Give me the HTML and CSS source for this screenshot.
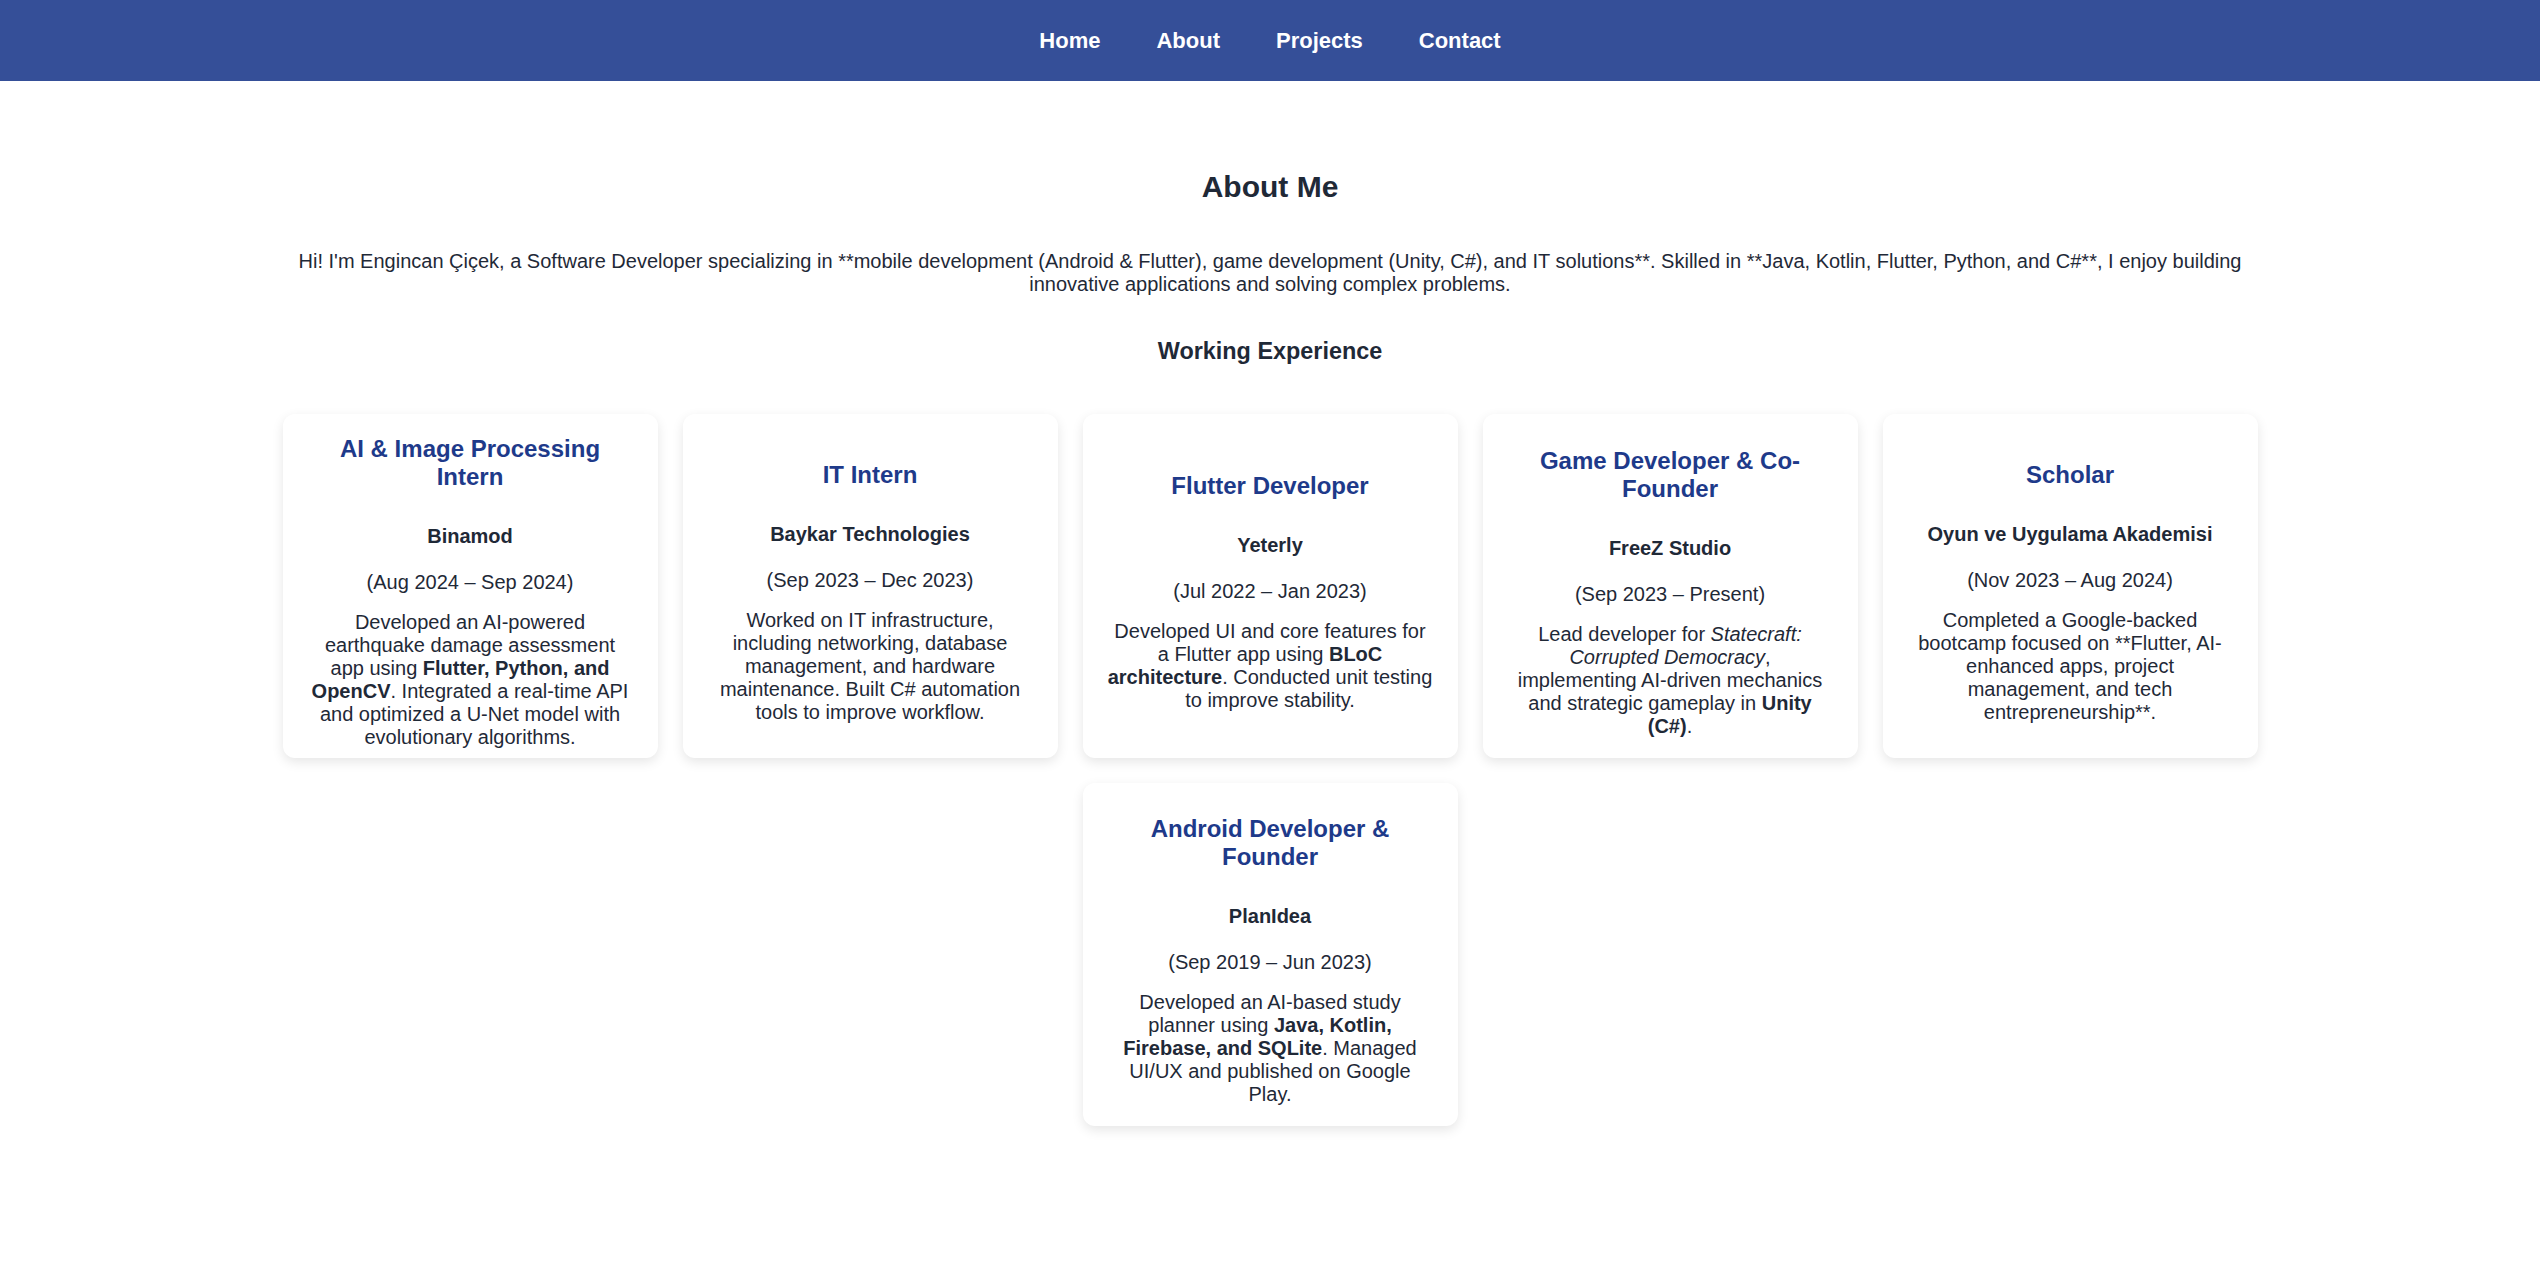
FILE: index.html
```html
<!DOCTYPE html>
<html lang="en">
<head>
<meta charset="UTF-8">
<title>About Me</title>
<link rel="stylesheet" href="styles.css">
</head>
<body>
<header class="navbar">
  <nav class="nav-links">
    <a href="#" class="nav-link">Home</a>
    <a href="#" class="nav-link">About</a>
    <a href="#" class="nav-link">Projects</a>
    <a href="#" class="nav-link">Contact</a>
  </nav>
</header>
<main class="about">
  <h2 class="about-title">About Me</h2>
  <p class="intro">Hi! I'm Engincan Çiçek, a Software Developer specializing in **mobile development (Android &amp; Flutter), game development (Unity, C#), and IT solutions**. Skilled in **Java, Kotlin, Flutter, Python, and C#**, I enjoy building innovative applications and solving complex problems.</p>
  <h3 class="section-title">Working Experience</h3>
  <div class="cards">
    <div class="card">
      <h3 class="card-title">AI &amp; Image Processing Intern</h3>
      <h4 class="company">Binamod</h4>
      <p class="date">(Aug 2024 – Sep 2024)</p>
      <p class="desc">Developed an AI-powered earthquake damage assessment app using <strong>Flutter, Python, and OpenCV</strong>. Integrated a real-time API and optimized a U-Net model with evolutionary algorithms.</p>
    </div>
    <div class="card">
      <h3 class="card-title">IT Intern</h3>
      <h4 class="company">Baykar Technologies</h4>
      <p class="date">(Sep 2023 – Dec 2023)</p>
      <p class="desc">Worked on IT infrastructure, including networking, database management, and hardware maintenance. Built C# automation tools to improve workflow.</p>
    </div>
    <div class="card">
      <h3 class="card-title">Flutter Developer</h3>
      <h4 class="company">Yeterly</h4>
      <p class="date">(Jul 2022 – Jan 2023)</p>
      <p class="desc">Developed UI and core features for a Flutter app using <strong>BLoC architecture</strong>. Conducted unit testing to improve stability.</p>
    </div>
    <div class="card">
      <h3 class="card-title">Game Developer &amp; Co-Founder</h3>
      <h4 class="company">FreeZ Studio</h4>
      <p class="date">(Sep 2023 – Present)</p>
      <p class="desc">Lead developer for <em>Statecraft: Corrupted Democracy</em>, implementing AI-driven mechanics and strategic gameplay in <strong>Unity (C#)</strong>.</p>
    </div>
    <div class="card">
      <h3 class="card-title">Scholar</h3>
      <h4 class="company">Oyun ve Uygulama Akademisi</h4>
      <p class="date">(Nov 2023 – Aug 2024)</p>
      <p class="desc">Completed a Google-backed bootcamp focused on **Flutter, AI-enhanced apps, project management, and tech entrepreneurship**.</p>
    </div>
    <div class="card">
      <h3 class="card-title">Android Developer &amp; Founder</h3>
      <h4 class="company">PlanIdea</h4>
      <p class="date">(Sep 2019 – Jun 2023)</p>
      <p class="desc">Developed an AI-based study planner using <strong>Java, Kotlin, Firebase, and SQLite</strong>. Managed UI/UX and published on Google Play.</p>
    </div>
  </div>
</main>
</body>
</html>
```
FILE: styles.css
```css
html, body {
  margin: 0;
  padding: 0;
  background: #ffffff;
}

body {
  font-family: "Liberation Sans", Arial, Helvetica, sans-serif;
  font-size: 20px;
  color: #1f2937;
}

.navbar {
  height: 81px;
  background: #354f98;
  display: flex;
  align-items: center;
  justify-content: center;
}

.nav-links {
  display: flex;
  gap: 56px;
  padding-top: 1px;
}

.nav-link {
  color: #ffffff;
  text-decoration: none;
  font-weight: bold;
  font-size: 22px;
}

.about {
  max-width: 2000px;
  margin: 0 auto;
  padding: 89px 0 60px;
  text-align: center;
}

.about-title {
  font-size: 30px;
  font-weight: bold;
  margin: 0 0 46px;
  color: #1f2937;
}

.intro {
  margin: 0 0 42px;
}

.section-title {
  font-size: 23.4px;
  font-weight: bold;
  margin: 0 0 49px;
  color: #1f2937;
}

.cards {
  display: flex;
  flex-wrap: wrap;
  justify-content: center;
  gap: 25px;
}

.card {
  width: 375px;
  min-height: 343px;
  box-sizing: border-box;
  padding: 21px 25px 9px;
  background: #ffffff;
  border-radius: 12px;
  box-shadow: 0 4px 12px rgba(0, 0, 0, 0.1);
  display: flex;
  flex-direction: column;
  justify-content: center;
}

.card-title {
  font-size: 24px;
  font-weight: bold;
  color: #1e3a8a;
  margin: 0 0 34px;
}

.company {
  font-size: 20px;
  font-weight: bold;
  margin: 0 0 23px;
}

.date {
  margin: 0 0 17px;
}

.desc {
  margin: 0;
}
```
